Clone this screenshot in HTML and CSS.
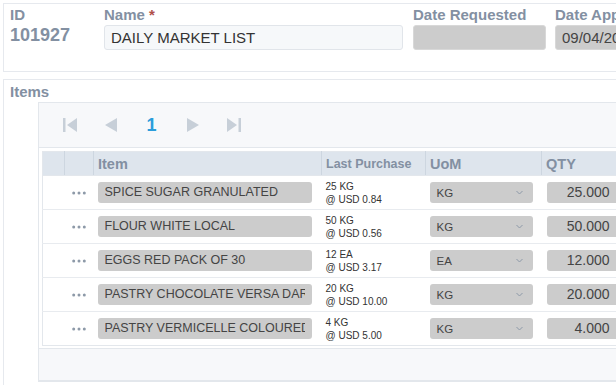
FILE: index.html
```html
<!DOCTYPE html>
<html lang="en">
<head>
  <meta charset="UTF-8" />
  <meta name="viewport" content="width=device-width, initial-scale=1.0"/>
  <title>Market List</title>
  <link rel="stylesheet" href="styles.css">
</head>
<body>

<!-- Header fields -->
<div class="panel head-panel">
  <div class="field field-id">
    <div class="label">ID</div>
    <div class="id-value">101927</div>
  </div>
  <div class="field field-name">
    <div class="label">Name <span class="req">*</span></div>
    <div class="input input-light">DAILY MARKET LIST</div>
  </div>
  <div class="field field-date">
    <div class="label">Date Requested</div>
    <div class="input input-grey"></div>
  </div>
  <div class="field field-date2">
    <div class="label">Date Approved</div>
    <div class="input input-grey">09/04/2019</div>
  </div>
</div>

<!-- Items -->
<div class="panel items-panel">
  <div class="label items-label">Items</div>
  <div class="grid">
    <div class="pager">
      <span class="pg-btn">
        <svg width="14" height="14" viewBox="0 0 14 14"><rect x="0" y="0" width="2.5" height="14"/><polygon points="14,0 4,7 14,14"/></svg>
      </span>
      <span class="pg-btn">
        <svg width="12" height="14" viewBox="0 0 12 14"><polygon points="12,0 0,7 12,14"/></svg>
      </span>
      <span class="pg-btn pg-num">1</span>
      <span class="pg-btn">
        <svg width="12" height="14" viewBox="0 0 12 14"><polygon points="0,0 12,7 0,14"/></svg>
      </span>
      <span class="pg-btn">
        <svg width="14" height="14" viewBox="0 0 14 14"><polygon points="0,0 10,7 0,14"/><rect x="11.5" y="0" width="2.5" height="14"/></svg>
      </span>
    </div>

    <div class="table-wrap">
      <table class="items">
        <thead>
          <tr>
            <th class="c-a"></th>
            <th class="c-b"></th>
            <th class="c-item">Item</th>
            <th class="c-last small">Last Purchase</th>
            <th class="c-uom">UoM</th>
            <th class="c-qty">QTY</th>
          </tr>
        </thead>
        <tbody id="rows"></tbody>
      </table>
    </div>
    <div class="grid-foot"></div>
  </div>
</div>

<script>
  var items = [
    { name: "SPICE SUGAR GRANULATED", qty: "25 KG", price: "0.84", uom: "KG", amount: "25.000" },
    { name: "FLOUR WHITE LOCAL", qty: "50 KG", price: "0.56", uom: "KG", amount: "50.000" },
    { name: "EGGS RED PACK OF 30", qty: "12 EA", price: "3.17", uom: "EA", amount: "12.000" },
    { name: "PASTRY CHOCOLATE VERSA DARK", qty: "20 KG", price: "10.00", uom: "KG", amount: "20.000" },
    { name: "PASTRY VERMICELLE COLOURED", qty: "4 KG", price: "5.00", uom: "KG", amount: "4.000" }
  ];

  var dots = '<svg width="14" height="4" viewBox="0 0 14 4"><circle cx="1.7" cy="2" r="1.5"/><circle cx="7" cy="2" r="1.5"/><circle cx="12.3" cy="2" r="1.5"/></svg>';
  var chevron = '<svg width="7" height="5" viewBox="0 0 7 5"><polyline points="0.5,1 3.5,4 6.5,1" fill="none" stroke-width="1"/></svg>';

  var html = "";
  items.forEach(function (it) {
    html += '<tr>' +
      '<td class="c-a"></td>' +
      '<td class="c-b"><span class="dots">' + dots + '</span></td>' +
      '<td class="c-item"><div class="cell-input"><span class="val">' + it.name + '</span></div></td>' +
      '<td class="c-last"><div class="last">' + it.qty + '<br>@ USD ' + it.price + '</div></td>' +
      '<td class="c-uom"><div class="cell-select"><span>' + it.uom + '</span>' + chevron + '</div></td>' +
      '<td class="c-qty"><div class="cell-input num"><span class="val">' + it.amount + '</span></div></td>' +
      '</tr>';
  });
  document.getElementById("rows").innerHTML = html;
</script>

</body>
</html>
```

FILE: styles.css
```css
/* Global */
body {
  font-family: "Liberation Sans", Arial, sans-serif;
  margin: 0;
  padding: 3px 0 0 3px;
  background: #ffffff;
  color: #333333;
  overflow: hidden;
  width: 613px;
  height: 382px;
}

.panel {
  width: 700px;
  background: #ffffff;
  border: 1px solid #e6e9ee;
  border-right: none;
}

.label {
  font-size: 15px;
  font-weight: bold;
  color: #8390a2;
  line-height: 17px;
}

.req {
  color: #b0504a;
}

/* Header panel */
.head-panel {
  height: 69px;
  display: flex;
  gap: 10px;
  padding: 2px 0 0 6px;
  box-sizing: border-box;
}

.field {
  display: flex;
  flex-direction: column;
  gap: 2px;
}

.field-id { width: 84px; }
.field-name { width: 299px; }
.field-date { width: 133px; }
.field-date2 { width: 140px; margin-left: -1px; }

.id-value {
  font-size: 18px;
  font-weight: bold;
  color: #8390a2;
  line-height: 21px;
}

.input {
  height: 25px;
  box-sizing: border-box;
  border: 1px solid #e1e5ea;
  border-radius: 3px;
  font-size: 15px;
  line-height: 23px;
  padding: 0 6px;
  color: #333333;
  white-space: nowrap;
  overflow: hidden;
}

.input-light { background: #f6f8fa; }
.input-grey { background: #cccccc; border-color: #d8d8d8; color: #444; }

/* Items panel */
.items-panel {
  margin-top: 7px;
  height: 306px;
  padding: 4px 0 0 6px;
  box-sizing: border-box;
  border-bottom: none;
}

.items-label {
  line-height: 16px;
}

.grid {
  margin: 2px 0 0 28px;
  border: 1px solid #e3e7ec;
  border-right: none;
  background: #ffffff;
}

.pager {
  height: 44px;
  background: #f7f8fa;
  border-bottom: 1px solid #e3e7ec;
  display: flex;
  align-items: center;
  padding-left: 10px;
}

.pg-btn {
  width: 41px;
  display: flex;
  justify-content: center;
  align-items: center;
  fill: #c7cfd8;
}

.pg-num {
  color: #2b9ddb;
  font-size: 18px;
  font-weight: bold;
  line-height: 20px;
}

.table-wrap {
  padding: 3px 0 2px 3px;
}

.items {
  border-collapse: collapse;
  border: 1px solid #e3e7ec;
  border-right: none;
  table-layout: fixed;
  width: 660px;
}

.items th {
  background: #dee5ed;
  color: #8390a2;
  font-size: 14.5px;
  font-weight: bold;
  text-align: left;
  height: 23px;
  padding: 0 0 0 4px;
  border-left: 1px solid #cdd6e0;
  border-bottom: 1px solid #e3e7ec;
}

.items th:first-child { border-left: none; }

.items th.small { font-size: 12.5px; }

.items td {
  height: 33px;
  padding: 0 0 0 4px;
  border-bottom: 1px solid #e8ebef;
  vertical-align: middle;
}

.items tr:last-child td { border-bottom: none; }

.items .c-a { width: 21px; padding: 0; }
.items .c-b { width: 28px; padding: 0; }
.c-item { width: 223px; }
.c-last { width: 99px; }
.c-uom { width: 111px; }

.dots {
  display: flex;
  justify-content: center;
  fill: #8d99a8;
}

.cell-input {
  height: 21px;
  box-sizing: border-box;
  background: #cccccc;
  border-radius: 3px;
  font-size: 12.5px;
  line-height: 21px;
  padding: 0 7px 0 7px;
  color: #444;
  white-space: nowrap;
  margin-right: 10px;
}

.cell-input .val {
  display: block;
  overflow: hidden;
}

.cell-input.num {
  text-align: right;
  width: 72px;
  font-size: 14px;
  padding: 0 9px 0 6px;
  margin-left: 1px;
}

.last {
  font-size: 10px;
  line-height: 13px;
  color: #333;
}

.cell-select {
  width: 103px;
  height: 21px;
  box-sizing: border-box;
  background: #cccccc;
  border-radius: 3px;
  font-size: 11.5px;
  color: #444;
  display: flex;
  align-items: center;
  justify-content: space-between;
  padding: 0 10px 0 7px;
}

.cell-select svg {
  stroke: #8d99a8;
}

.grid-foot {
  height: 31px;
  background: #f7f8fa;
  border-top: 1px solid #e3e7ec;
  border-bottom: 1px solid #e3e7ec;
}
```
